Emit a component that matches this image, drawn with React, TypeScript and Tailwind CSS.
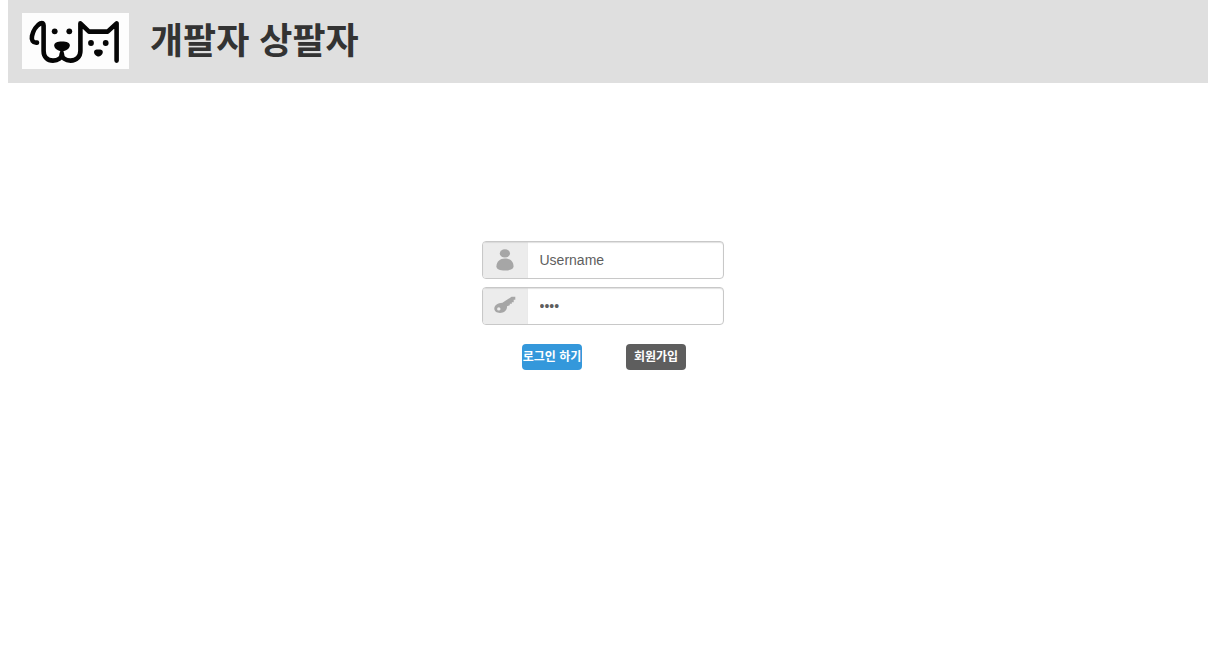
import React, { useState } from "react";

const Logo = () => (
  <svg
    className="w-[107px] h-[56px] bg-[#fdfdfd]"
    viewBox="0 0 107 56"
    fill="none"
    role="img"
    aria-label="logo"
  >
    <path
      d="M15 29.6C10.8 30 9.2 27 10 23C11.2 17.6 14.8 12.2 18.4 10.4C20.4 9.6 21.6 10.2 21.6 12.6V38C21.6 44 25.6 47.6 31 47.6C36 47.6 39.8 45 39.8 40.5C39.8 45 43.6 47.6 48.6 47.6C54.4 47.6 58.4 43.6 58.4 38V10.4L67 18.6H85.6L94.6 10.4V47.6"
      stroke="#050505"
      strokeWidth="4.6"
      strokeLinecap="round"
      strokeLinejoin="round"
    />
    <path d="M39.8 36V43" stroke="#050505" strokeWidth="3" />
    <g fill="#050505">
      <circle cx="32.7" cy="18.3" r="2.9" />
      <circle cx="47.3" cy="18.3" r="2.9" />
      <path d="M32.2 32.6C32.2 29.8 35 28.6 40 28.6C45 28.6 47.8 29.8 47.8 32.6C47.8 35.6 43.6 38.4 40 38.4C36.4 38.4 32.2 35.6 32.2 32.6Z" />
      <circle cx="69" cy="30" r="2.9" />
      <circle cx="83.7" cy="30" r="2.9" />
      <path d="M72 38.9C72 37 73.6 36.4 76.4 36.4C79.2 36.4 80.8 37 80.8 38.9C80.8 41.2 78.4 43.4 76.4 43.4C74.4 43.4 72 41.2 72 38.9Z" />
    </g>
  </svg>
);

const UserIcon = () => (
  <svg className="w-[18px] h-[22px]" viewBox="0 0 18 22" fill="#a6a6a6">
    <ellipse cx="8.9" cy="4.4" rx="5.1" ry="4.1" />
    <path d="M0.4 17.2C0.4 12.6 4 9.4 8.9 9.4C13.8 9.4 17.5 12.6 17.5 17.2C17.5 20.4 14 21.4 8.9 21.4C3.8 21.4 0.4 20.4 0.4 17.2Z" />
  </svg>
);

const KeyIcon = () => (
  <svg className="mb-[2px] w-[22px] h-[18px]" viewBox="0 0 22 18" fill="#a6a6a6">
    <path
      fillRule="evenodd"
      d="M17.6 0.8H21.3V3.8H19.7V6.2H17.8V7.8H15.8V9.2L13 10.2C13.4 14 10.2 17 6 17C2.6 17 0.3 15.2 0.3 12.6C0.3 9.4 4 7 8.4 6.8ZM4.8 11.3A1.7 1.6 0 1 0 4.8 14.5A1.7 1.6 0 1 0 4.8 11.3Z"
    />
  </svg>
);

type FieldProps = {
  icon: React.ReactNode;
  type: string;
  name: string;
  value: string;
  onChange: (value: string) => void;
};

const Field = ({ icon, type, name, value, onChange }: FieldProps) => (
  <label className="flex w-[242px] h-[38px] overflow-hidden rounded border border-[#c8c8c8] bg-white shadow-[inset_0_1px_1px_rgba(0,0,0,0.12)]">
    <span className="flex w-[45px] items-center justify-center bg-[#ececec] pr-[2px] shadow-[inset_0_1px_1px_rgba(0,0,0,0.08)]">
      {icon}
    </span>
    <input
      type={type}
      name={name}
      value={value}
      onChange={(e) => onChange(e.target.value)}
      className="min-w-0 flex-1 bg-transparent pl-[11.5px] pr-2 text-[14px] text-[#5e5e5e] outline-none font-['Liberation_Sans',sans-serif]"
    />
  </label>
);

const App = () => {
  const [username, setUsername] = useState("Username");
  const [password, setPassword] = useState("pass");

  return (
    <div className="min-h-screen bg-white font-['Liberation_Sans','Noto_Sans_CJK_KR',sans-serif]">
      {/* 상단 헤더 */}
      <header className="mx-2 mr-3 flex h-[83px] items-center bg-[#dfdfdf] pl-[14px] pb-px">
        <Logo />
        <h1 className="ml-[21px] pt-[2px] text-[36px] leading-none font-bold text-[#333]">
          개팔자 상팔자
        </h1>
      </header>

      {/* 로그인 폼 */}
      <form
        className="ml-[482px] mt-[158px] w-[242px]"
        onSubmit={(e) => e.preventDefault()}
      >
        <div className="flex flex-col gap-2">
          <Field
            icon={<UserIcon />}
            type="text"
            name="username"
            value={username}
            onChange={setUsername}
          />
          <Field
            icon={<KeyIcon />}
            type="password"
            name="password"
            value={password}
            onChange={setPassword}
          />
        </div>
        <div className="mt-[19px] ml-10 flex gap-11">
          <button
            type="submit"
            className="h-[26px] w-[60px] cursor-pointer whitespace-nowrap rounded bg-[#3498db] text-[12px] font-bold text-white"
          >
            로그인 하기
          </button>
          <button
            type="button"
            className="h-[26px] w-[60px] cursor-pointer whitespace-nowrap rounded bg-[#5e5e5e] text-[12px] font-bold text-white"
          >
            회원가입
          </button>
        </div>
      </form>
    </div>
  );
};

export default App;
